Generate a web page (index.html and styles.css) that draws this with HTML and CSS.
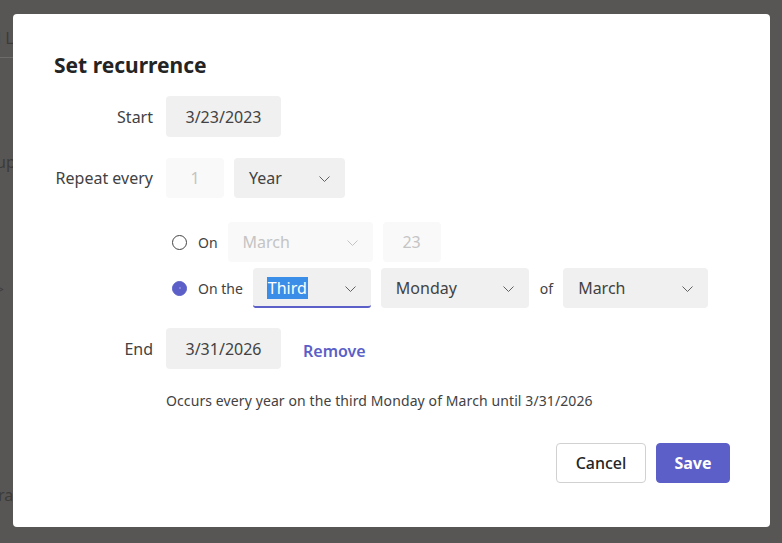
FILE: index.html
```html
<!DOCTYPE html>
<html lang="en">
<head>
<meta charset="utf-8">
<title>Set recurrence</title>
<link rel="stylesheet" href="styles.css">
</head>
<body>
<div class="backdrop" aria-hidden="true">
  <span class="bg-frag frag-top">l L</span>
  <span class="bg-line"></span>
  <span class="bg-frag frag-up">up</span>
  <span class="bg-frag frag-arrow">&gt;</span>
  <span class="bg-frag frag-ra">ra</span>
</div>
<div class="dialog" role="dialog" aria-labelledby="dlg-title">
  <h1 class="title" id="dlg-title">Set recurrence</h1>

  <div class="row row-start">
    <div class="label">Start</div>
    <div class="date-box">3/23/2023</div>
  </div>

  <div class="row row-repeat">
    <div class="label">Repeat every</div>
    <div class="controls">
      <div class="num-box disabled">1</div>
      <div class="dropdown w-year"><span>Year</span><svg class="chev" width="11" height="6" viewBox="0 0 11 6"><path d="M0.5 0.5 L5.5 5.5 L10.5 0.5" fill="none" stroke="#616161" stroke-width="1"/></svg></div>
    </div>
  </div>

  <div class="options">
    <div class="opt-row">
      <span class="radio"></span>
      <span class="opt-label">On</span>
      <div class="dropdown disabled w-month1"><span>March</span><svg class="chev" width="11" height="6" viewBox="0 0 11 6"><path d="M0.5 0.5 L5.5 5.5 L10.5 0.5" fill="none" stroke="#c4c4c4" stroke-width="1"/></svg></div>
      <div class="num-box disabled">23</div>
    </div>
    <div class="opt-row">
      <span class="radio checked"></span>
      <span class="opt-label">On the</span>
      <div class="dropdown focused w-third"><span class="sel">Third</span><svg class="chev" width="11" height="6" viewBox="0 0 11 6"><path d="M0.5 0.5 L5.5 5.5 L10.5 0.5" fill="none" stroke="#616161" stroke-width="1"/></svg></div>
      <div class="dropdown w-monday"><span>Monday</span><svg class="chev" width="11" height="6" viewBox="0 0 11 6"><path d="M0.5 0.5 L5.5 5.5 L10.5 0.5" fill="none" stroke="#616161" stroke-width="1"/></svg></div>
      <span class="of-label">of</span>
      <div class="dropdown w-month2"><span>March</span><svg class="chev" width="11" height="6" viewBox="0 0 11 6"><path d="M0.5 0.5 L5.5 5.5 L10.5 0.5" fill="none" stroke="#616161" stroke-width="1"/></svg></div>
    </div>
  </div>

  <div class="row row-end">
    <div class="label">End</div>
    <div class="date-box">3/31/2026</div>
    <a class="remove" href="#">Remove</a>
  </div>

  <p class="summary">Occurs every year on the third Monday of March until 3/31/2026</p>

  <div class="actions">
    <button class="btn btn-cancel" type="button">Cancel</button>
    <button class="btn btn-save" type="button">Save</button>
  </div>
</div>
</body>
</html>
```

FILE: styles.css
```css
* { box-sizing: border-box; }

html, body {
  margin: 0;
  padding: 0;
}

body {
  width: 782px;
  height: 543px;
  overflow: hidden;
  background: #575655;
  font-family: "Noto Sans", "Open Sans", sans-serif;
  color: #424242;
  position: relative;
}

/* dimmed page behind the overlay */
.backdrop {
  position: absolute;
  inset: 0;
  z-index: 0;
}
.bg-frag {
  position: absolute;
  font-size: 16px;
  color: #3c3b3a;
  line-height: 18px;
}
.frag-top { left: -3px; top: 29px; }
.frag-up { left: -4px; top: 153px; }
.frag-arrow { left: -3px; top: 281px; font-size: 12px; }
.frag-ra { left: -2px; top: 486px; }
.bg-line {
  position: absolute;
  left: 0;
  top: 57px;
  width: 13px;
  height: 1px;
  background: #6d6c6b;
}

.dialog {
  position: relative;
  z-index: 1;
  margin: 14px 0 0 13px;
  width: 757px;
  height: 513px;
  background: #ffffff;
  border-radius: 4px;
  padding: 38px 40px 44px 41px;
  display: flex;
  flex-direction: column;
}

.title {
  margin: 0;
  font-size: 21px;
  line-height: 26px;
  font-weight: 700;
  color: #242424;
  height: 26px;
}

.row {
  display: flex;
  align-items: center;
}
.row-start { margin-top: 18px; }
.row-repeat { margin-top: 21px; }
.row-end { margin-top: 20px; }

.label {
  flex: none;
  width: 99px;
  margin-right: 13px;
  text-align: right;
  white-space: nowrap;
  font-size: 16px;
  color: #424242;
}

.controls {
  display: flex;
  align-items: center;
  gap: 10px;
}

.date-box {
  width: 115px;
  height: 41px;
  background: #f0f0f0;
  border-radius: 4px;
  display: flex;
  align-items: center;
  justify-content: center;
  font-size: 16px;
  color: #424242;
}

.num-box {
  width: 58px;
  height: 40px;
  border-radius: 4px;
  display: flex;
  align-items: center;
  justify-content: center;
  font-size: 16px;
}
.num-box.disabled {
  background: #f9f9f9;
  color: #c4c4c4;
}

.dropdown {
  height: 40px;
  background: #f0f0f0;
  border-radius: 4px;
  display: flex;
  align-items: center;
  justify-content: space-between;
  padding: 0 15px 0 15px;
  font-size: 16px;
  color: #424242;
}
.dropdown.disabled {
  background: #f9f9f9;
  color: #c4c4c4;
}
.dropdown.focused {
  border-bottom: 2px solid #5b5fc7;
  border-radius: 4px 4px 3px 3px;
  padding-top: 2px;
}
.dropdown .sel {
  background: #3a8ee8;
  color: #ffffff;
  padding: 0 1px;
  margin-left: -1px;
}
.chev { flex: none; margin-top: 1px; }

.w-year { width: 111px; }
.w-month1 { width: 145px; }
.w-third { width: 118px; }
.w-monday { width: 148px; }
.w-month2 { width: 145px; }

.options {
  margin-top: 24px;
  padding-left: 118px;
  display: flex;
  flex-direction: column;
  gap: 6px;
}

.opt-row {
  display: flex;
  align-items: center;
  height: 40px;
}

.radio {
  width: 15px;
  height: 15px;
  border-radius: 50%;
  border: 1px solid #444444;
  flex: none;
  position: relative;
}
.radio.checked {
  border-color: #5b5fc7;
  background: #5b5fc7;
}
.radio.checked::after {
  content: "";
  position: absolute;
  left: 5.5px;
  top: 5.5px;
  width: 2px;
  height: 2px;
  border-radius: 50%;
  background: #8f92dc;
}

.opt-label {
  margin-left: 11px;
  margin-right: 10px;
  font-size: 14px;
  color: #424242;
}

.opt-row .num-box { margin-left: 10px; }
.w-monday { margin-left: 10px; }

.of-label {
  margin: 0 10px 0 11px;
  font-size: 14px;
  color: #424242;
}

.remove {
  margin-left: 22px;
  color: #5b5fc7;
  font-weight: 600;
  font-size: 16px;
  text-decoration: none;
  padding-top: 4px;
}

.summary {
  margin: 22px 0 0 112px;
  font-size: 14px;
  line-height: 20px;
  letter-spacing: 0.1px;
  color: #424242;
}

.actions {
  margin-top: auto;
  display: flex;
  justify-content: flex-end;
  gap: 10px;
}

.btn {
  height: 40px;
  border-radius: 4px;
  font-family: "Noto Sans", "Open Sans", sans-serif;
  font-size: 16px;
  font-weight: 600;
  cursor: pointer;
}
.btn-cancel {
  width: 90px;
  background: #ffffff;
  border: 1px solid #d1d1d1;
  color: #242424;
  font-weight: 500;
}
.btn-save {
  width: 74px;
  background: #5b5fc7;
  border: 1px solid #5b5fc7;
  color: #ffffff;
  font-weight: 700;
}
```
